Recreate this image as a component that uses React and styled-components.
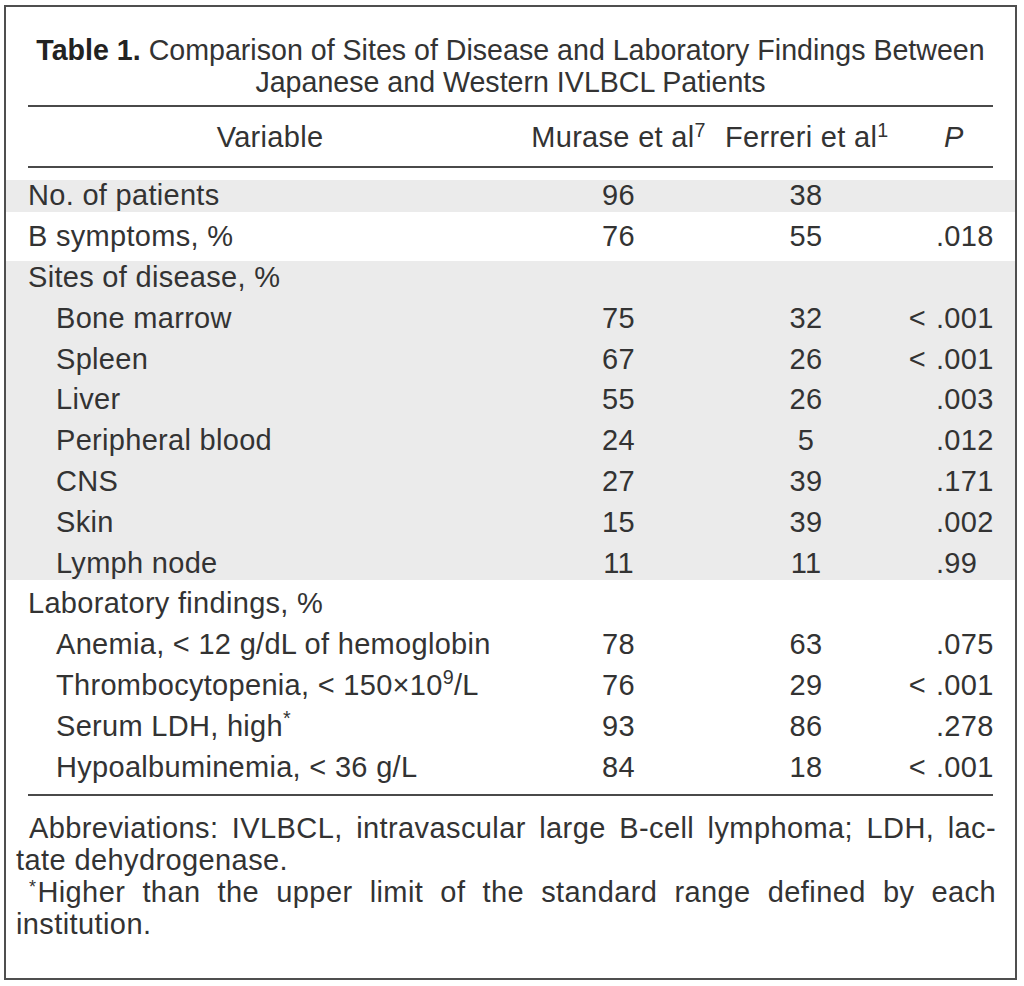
import styled, { createGlobalStyle } from 'styled-components';

const GlobalStyle = createGlobalStyle`
  body {
    margin: 0;
    background: #fff;
    font-family: "Liberation Sans", Arial, sans-serif;
    color: #333;
  }
`;

const groups = [
  { shaded: true, rows: [{ label: 'No. of patients', a: '96', b: '38' }] },
  { shaded: false, rows: [{ label: 'B symptoms, %', a: '76', b: '55', p: '.018' }] },
  {
    shaded: true,
    rows: [
      { label: 'Sites of disease, %' },
      { label: 'Bone marrow', sub: true, a: '75', b: '32', lt: true, p: '.001' },
      { label: 'Spleen', sub: true, a: '67', b: '26', lt: true, p: '.001' },
      { label: 'Liver', sub: true, a: '55', b: '26', p: '.003' },
      { label: 'Peripheral blood', sub: true, a: '24', b: '5', p: '.012' },
      { label: 'CNS', sub: true, a: '27', b: '39', p: '.171' },
      { label: 'Skin', sub: true, a: '15', b: '39', p: '.002' },
      { label: 'Lymph node', sub: true, a: '11', b: '11', p: '.99' },
    ],
  },
  {
    shaded: false,
    rows: [
      { label: 'Laboratory findings, %' },
      { label: 'Anemia, < 12 g/dL of hemoglobin', sub: true, a: '78', b: '63', p: '.075' },
      { label: <>Thrombocytopenia, &lt; 150×10<Sup>9</Sup>/L</>, sub: true, a: '76', b: '29', lt: true, p: '.001' },
      { label: <>Serum LDH, high<Sup>*</Sup></>, sub: true, a: '93', b: '86', p: '.278' },
      { label: 'Hypoalbuminemia, < 36 g/L', sub: true, a: '84', b: '18', lt: true, p: '.001' },
    ],
  },
];

function Sup({ children }) {
  return <SupText>{children}</SupText>;
}

export default function App() {
  return (
    <Page>
      <GlobalStyle />
      <Frame>
        <Caption>
          <CaptionLine>
            <strong>Table 1.</strong> Comparison of Sites of Disease and Laboratory Findings Between
          </CaptionLine>
          <CaptionLine>Japanese and Western IVLBCL Patients</CaptionLine>
        </Caption>
        <Rule $top="7px" />
        <HeadRow>
          <HeadLabel>Variable</HeadLabel>
          <Num>
            Murase et al<Sup>7</Sup>
          </Num>
          <Num>
            Ferreri et al<Sup>1</Sup>
          </Num>
          <HeadP>P</HeadP>
        </HeadRow>
        <Rule $top="7.6px" />
        <Body>
          {groups.map((g, gi) => (
            <Band key={gi} $shaded={g.shaded}>
              {g.rows.map((r, ri) => (
                <Row key={ri}>
                  <Label $sub={r.sub}>{r.label}</Label>
                  <Num>{r.a}</Num>
                  <Num>{r.b}</Num>
                  <PCell>
                    <Prefix>{r.lt ? '<' : ''}</Prefix>
                    <span>{r.p}</span>
                  </PCell>
                </Row>
              ))}
            </Band>
          ))}
        </Body>
        <Rule $top="6.4px" />
        <Notes>
          <NoteLine $indent $full>
            Abbreviations: IVLBCL, intravascular large B-cell lymphoma; LDH, lac-
          </NoteLine>
          <NoteLine>tate dehydrogenase.</NoteLine>
          <NoteLine $indent $full>
            <NoteMark>*</NoteMark>Higher than the upper limit of the standard range defined by each
          </NoteLine>
          <NoteLine>institution.</NoteLine>
        </Notes>
      </Frame>
    </Page>
  );
}

// styles
const Page = styled.div`
  padding: 5px 7px 6px 4px;
`;

const Frame = styled.div`
  box-sizing: border-box;
  height: 975px;
  border: 2px solid #4f4f4f;
  display: flex;
  flex-direction: column;
`;

const Caption = styled.div`
  padding: 27px 22px 0;
  font-size: 28.6px;
  line-height: 32px;
  text-align: center;
  strong {
    color: #222;
  }
`;

const CaptionLine = styled.div`
  white-space: nowrap;
`;

const Rule = styled.div`
  height: 2px;
  margin: ${(p) => p.$top} 22px 0;
  background: #4a4a4a;
`;

const grid = `
  display: grid;
  grid-template-columns: 484px 213px 162px 1fr;
  align-items: center;
  height: 40.8px;
  padding: 0 22px;
  font-size: 29px;
  letter-spacing: 0.3px;
  white-space: nowrap;
`;

const HeadRow = styled.div`
  ${grid}
  margin-top: 10.6px;
`;

const HeadLabel = styled.div`
  text-align: center;
`;

const HeadP = styled.div`
  padding-left: 57px;
  font-style: italic;
`;

const Body = styled.div`
  display: flex;
  flex-direction: column;
  margin-top: 7.6px;
`;

const Band = styled.div`
  display: flex;
  flex-direction: column;
  margin: 4px 0;
  background: ${(p) => (p.$shaded ? '#ebebeb' : 'transparent')};
  & > :first-child {
    margin-top: -4px;
  }
  & > :last-child {
    margin-bottom: -4px;
  }
`;

const Row = styled.div`
  ${grid}
`;

const Label = styled.div`
  padding-left: ${(p) => (p.$sub ? '28px' : '0')};
`;

const Num = styled.div`
  text-align: center;
`;

const PCell = styled.div`
  display: flex;
`;

const Prefix = styled.span`
  width: 49px;
  padding-right: 10px;
  box-sizing: border-box;
  text-align: right;
`;

const SupText = styled.sup`
  font-size: 0.68em;
  line-height: 0;
  vertical-align: baseline;
  position: relative;
  top: -0.55em;
`;

const Notes = styled.div`
  margin-top: 16px;
  padding: 0 19px 0 10px;
  font-size: 29px;
  line-height: 32px;
  letter-spacing: 0.4px;
`;

const NoteLine = styled.div`
  white-space: nowrap;
  text-indent: ${(p) => (p.$indent ? '13px' : '0')};
  text-align: ${(p) => (p.$full ? 'justify' : 'left')};
  text-align-last: ${(p) => (p.$full ? 'justify' : 'left')};
`;

const NoteMark = styled.span`
  font-size: 0.62em;
  line-height: 0;
  position: relative;
  top: -0.5em;
  margin-right: 1px;
`;
